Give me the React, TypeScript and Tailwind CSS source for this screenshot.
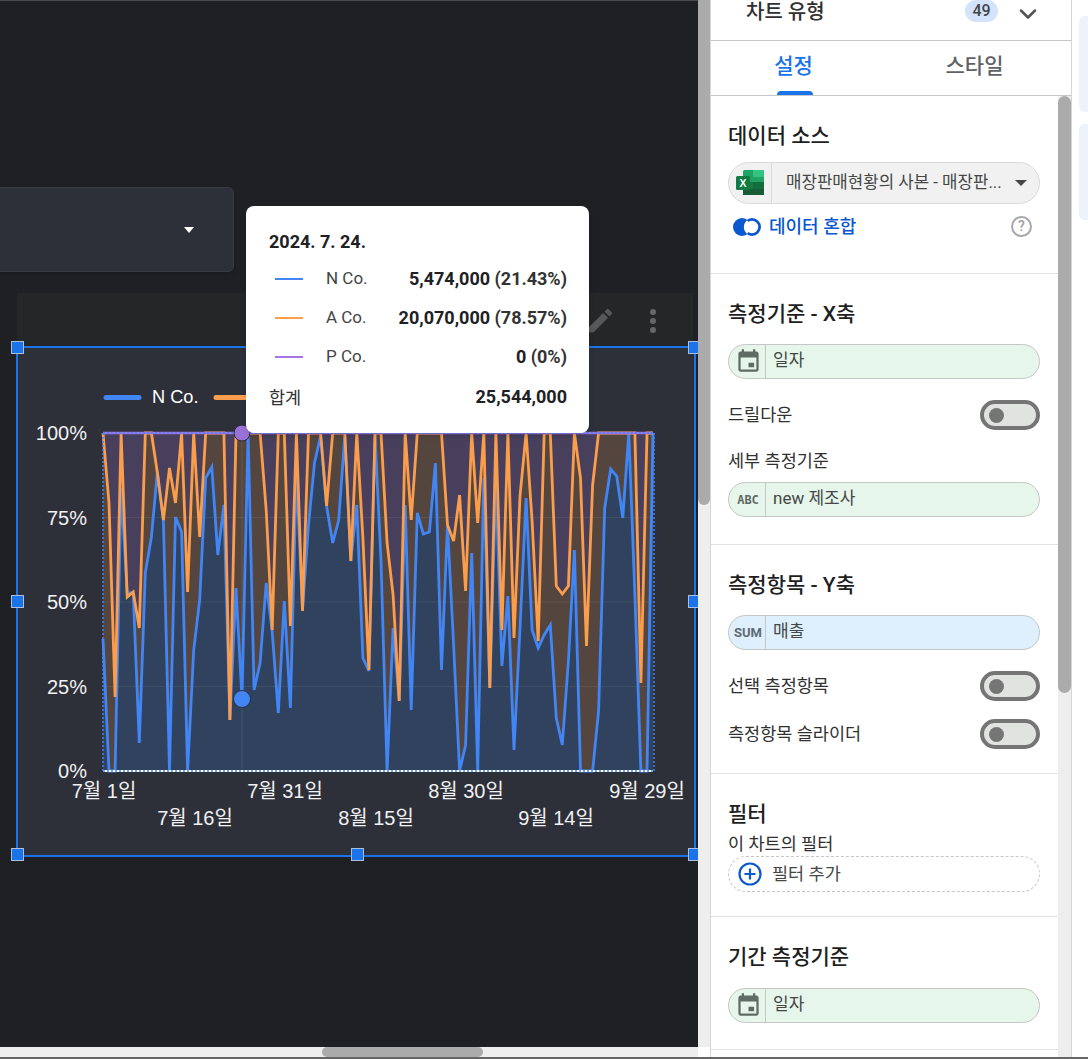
import React from "react";
import { ChevronDown } from "lucide-react";

// pixel offsets from the top of the plot (0 = 100%, 338 = 0%)
const blueLine = [
  206, 338, 338, 55, 160, 160, 310, 140, 104, 39, 87, 338, 84, 99, 338, 217, 167, 45, 34, 122, 72, 287, 155, 266, 0,
  257, 230, 150, 199, 280, 168, 275, 38, 178, 92, 30, 3, 73, 110, 87, 3, 128, 72, 225, 238, 2, 128, 338, 195, 268, 72,
  277, 80, 101, 99, 30, 237, 92, 212, 338, 312, 120, 338, 45, 255, 48, 233, 163, 317, 195, 65, 197, 215, 202, 192, 285,
  312, 228, 117, 338, 338, 338, 278, 75, 36, 43, 85, 0, 162, 338, 338, 0,
];
const orangeLine = [
  0, 70, 264, 0, 164, 159, 195, 0, 0, 40, 87, 35, 70, 0, 159, 0, 104, 0, 0, 0, 0, 287, 0, 0, 0, 0, 0, 77, 197, 0, 0,
  193, 0, 178, 0, 0, 0, 73, 0, 0, 0, 128, 0, 105, 237, 0, 0, 110, 162, 268, 0, 87, 0, 0, 0, 0, 0, 92, 108, 62, 158, 0,
  90, 0, 255, 0, 197, 0, 205, 63, 0, 88, 208, 0, 0, 153, 161, 153, 0, 45, 213, 52, 0, 0, 0, 0, 0, 0, 0, 250, 0, 0,
];

const px = (i: number) => 103 + i * 6.044;
const toPoints = (line: number[]) => line.map((y, i) => `${px(i).toFixed(1)},${433 + y}`).join(" ");
const toArea = (line: number[]) => `103,771 ${toPoints(line)} 653,771`;

const yLabels = [
  { label: "100%", y: 440 },
  { label: "75%", y: 525 },
  { label: "50%", y: 609 },
  { label: "25%", y: 694 },
  { label: "0%", y: 778 },
];
const xLabels = [
  { label: "7월 1일", x: 104, y: 798 },
  { label: "7월 16일", x: 195, y: 825 },
  { label: "7월 31일", x: 285, y: 798 },
  { label: "8월 15일", x: 376, y: 825 },
  { label: "8월 30일", x: 466, y: 798 },
  { label: "9월 14일", x: 556, y: 825 },
  { label: "9월 29일", x: 647, y: 798 },
];
const handles = [
  "left-[-7px] top-[-7px]",
  "left-[670px] top-[-7px]",
  "left-[-7px] top-[247px]",
  "left-[670px] top-[247px]",
  "left-[-7px] top-[500px]",
  "left-[333px] top-[500px]",
  "left-[670px] top-[500px]",
];
const tooltipRows = [
  { name: "N Co.", value: "5,474,000", share: "(21.43%)", color: "bg-[#4285f4]" },
  { name: "A Co.", value: "20,070,000", share: "(78.57%)", color: "bg-[#ff9e4a]" },
  { name: "P Co.", value: "0", share: "(0%)", color: "bg-[#a875e8]" },
];

function CalendarIcon() {
  return (
    <svg viewBox="0 0 24 24" className="h-[27px] w-[27px] fill-[#5f6b64]">
      <path d="M6 1h2v2h8V1h2v2h1c1.1 0 2 .9 2 2v14c0 1.1-.9 2-2 2H5c-1.1 0-2-.9-2-2V5c0-1.1.9-2 2-2h1V1zM5 8.5V19h14V8.5H5zM12 13h5v4h-5v-4z" />
    </svg>
  );
}

function Chip({ icon, label, tone }: { icon: React.ReactNode; label: string; tone: "green" | "blue" }) {
  return (
    <div
      className={`flex h-[35px] w-[312px] items-center rounded-full border border-[#c4c7c5] ${
        tone === "green" ? "bg-[#e6f6ea]" : "bg-[#def0fd]"
      }`}
    >
      <div className="flex h-full w-[37px] shrink-0 items-center justify-center border-r border-[#c4c7c5] pl-[2px]">
        {icon}
      </div>
      <span className="pl-[7px] pb-[2px] text-[17px] text-[#444746]">{label}</span>
    </div>
  );
}

function Toggle() {
  return (
    <div className="flex h-[30px] w-[60px] items-center rounded-full border-[4px] border-[#757575] bg-[#e1e3e1] pl-[5px]">
      <div className="h-[15px] w-[15px] rounded-full bg-[#757575]" />
    </div>
  );
}

function Heading({ children }: { children: React.ReactNode }) {
  return <h3 className="text-[21px] font-medium leading-[26px] text-[#1f1f1f]">{children}</h3>;
}

function ExcelIcon() {
  return (
    <svg viewBox="0 0 28 26" className="h-[26px] w-[28px]">
      <rect x="7" y="0" width="21" height="25" rx="1.5" fill="#21a366" />
      <rect x="17" y="0" width="11" height="7" fill="#33c481" />
      <rect x="7" y="12" width="21" height="13" fill="#107c41" />
      <rect x="17" y="12" width="11" height="7" fill="#185c37" opacity="0.45" />
      <rect x="7" y="19" width="21" height="6" fill="#185c37" />
      <rect x="0" y="6" width="14" height="14" rx="1.5" fill="#107c41" />
      <text x="3.5" y="17" fontSize="10.5" fontWeight="700" fill="#fff" className="font-['Liberation_Sans',sans-serif]">
        X
      </text>
    </svg>
  );
}

function ChartCard() {
  return (
    <div className="absolute left-[16px] top-[345px] h-[511px] w-[680px] border-2 border-[#1a73e8] bg-[#2d2f39]">
      <svg viewBox="18 348 676 507" className="absolute inset-0 h-full w-full">
        <polygon points="103,433 653,433 653,771 103,771" fill="#473f5c" />
        <polygon points={toArea(orangeLine)} fill="#54463e" />
        <polygon points={toArea(blueLine)} fill="#30425d" />
        {[517.5, 602, 686.5].map((y) => (
          <line key={y} x1="103" x2="653" y1={y} y2={y} stroke="#ffffff" strokeOpacity="0.07" />
        ))}
        <line x1="242" x2="242" y1="433" y2="771" stroke="#ffffff" strokeOpacity="0.1" />
        <polyline points={toPoints(blueLine)} fill="none" stroke="#4285f4" strokeWidth="2.8" strokeLinejoin="miter" />
        <polyline points={toPoints(orangeLine)} fill="none" stroke="#fa9d4c" strokeWidth="2.8" strokeLinejoin="miter" />
        <line x1="103" x2="653" y1="433" y2="433" stroke="#a875e8" strokeWidth="2.5" />
        <line x1="103" x2="653" y1="433" y2="433" stroke="#4285f4" strokeWidth="1.5" strokeDasharray="2 2" />
        <line x1="103" x2="653" y1="771" y2="771" stroke="#ffffff" strokeWidth="2" />
        <line x1="103" x2="653" y1="771" y2="771" stroke="#4285f4" strokeWidth="1.5" strokeDasharray="2 2" />
        <line x1="103" x2="103" y1="433" y2="771" stroke="#4285f4" strokeWidth="1.5" strokeDasharray="2 2" />
        <line x1="654" x2="654" y1="433" y2="771" stroke="#4285f4" strokeWidth="1.5" strokeDasharray="2 2" />
        <circle cx="242" cy="433" r="8" fill="#9a71d6" stroke="#2b2b35" />
        <circle cx="242" cy="699" r="8.5" fill="#4285f4" stroke="#26334a" />

        <line x1="106" x2="139" y1="397.5" y2="397.5" stroke="#4285f4" strokeWidth="5" strokeLinecap="round" />
        <text x="152" y="403" fontSize="18.2" fill="#ffffff">
          N Co.
        </text>
        <line x1="216" x2="250" y1="397.5" y2="397.5" stroke="#fa9d4c" strokeWidth="5" strokeLinecap="round" />

        {yLabels.map((item) => (
          <text key={item.label} x="87" y={item.y} fontSize="20" fill="#f1f1f1" textAnchor="end">
            {item.label}
          </text>
        ))}
        {xLabels.map((item) => (
          <text key={item.label} x={item.x} y={item.y} fontSize="20" fill="#f1f1f1" textAnchor="middle">
            {item.label}
          </text>
        ))}
      </svg>
      {handles.map((pos) => (
        <div key={pos} className={`absolute h-[13px] w-[13px] border border-[#a9bfdf] bg-[#1a73e8] ${pos}`} />
      ))}
    </div>
  );
}

function Tooltip() {
  return (
    <div className="absolute left-[246px] top-[205px] h-[227px] w-[343px] rounded-lg bg-white pl-[23px] pr-[22px] pt-[26px] font-['Roboto','Noto_Sans_CJK_KR',sans-serif] text-[17px] text-[#202124] shadow-md">
      <div className="text-[18px] font-bold leading-[20px]">2024. 7. 24.</div>
      <div className="mt-[7px] flex flex-col">
        {tooltipRows.map((row) => (
          <div key={row.name} className="flex h-[39px] items-center">
            <div className={`ml-[6px] h-[2px] w-[28px] ${row.color}`} />
            <span className="ml-[23px] text-[#444]">{row.name}</span>
            <span className="ml-auto whitespace-pre text-[18px]">
              <b className="font-bold">{row.value}</b>
              <b className="font-bold text-[#333]"> {row.share}</b>
            </span>
          </div>
        ))}
      </div>
      <div className="mt-[9px] flex items-center justify-between">
        <span className="text-[17.5px] text-[#333]">합계</span>
        <b className="-mt-[3px] text-[18px] font-bold">25,544,000</b>
      </div>
    </div>
  );
}

function Canvas() {
  return (
    <div className="relative w-[698px] flex-1 overflow-hidden border-t border-[#4a4a4a] bg-[#1f2024]">
      <div className="absolute left-[-20px] top-[186px] flex h-[85px] w-[254px] items-center justify-end rounded-md border border-[#3a3c44] bg-[#2d2f39] pr-[39px] shadow-md">
        <div className="h-0 w-0 border-x-[5px] border-t-[6px] border-x-transparent border-t-white" />
      </div>
      <div className="absolute left-[17px] top-[292px] flex h-[55px] w-[676px] items-center justify-end bg-[#252628] pr-[37px]">
        <svg viewBox="0 0 24 24" className="mr-[34px] h-[31px] w-[31px] fill-[#57585a]">
          <path d="M3 17.25V21h3.75L17.81 9.94l-3.75-3.75L3 17.25zM20.71 7.04a1 1 0 0 0 0-1.41l-2.34-2.34a1 1 0 0 0-1.41 0l-1.83 1.83 3.75 3.75 1.83-1.83z" />
        </svg>
        <div className="flex flex-col gap-[3px]">
          <div className="h-[6px] w-[6px] rounded-full bg-[#66676a]" />
          <div className="h-[6px] w-[6px] rounded-full bg-[#66676a]" />
          <div className="h-[6px] w-[6px] rounded-full bg-[#66676a]" />
        </div>
      </div>
      <ChartCard />
      <Tooltip />
    </div>
  );
}

function Panel() {
  return (
    <div className="flex w-[362px] flex-col border-x border-[#d5d5d5] bg-white font-['Roboto','Noto_Sans_CJK_KR',sans-serif]">
      <div className="flex h-[41px] shrink-0 items-start border-b border-[#c7c7c7] pl-[35px] pr-[29px]">
        <span className="text-[20px] font-medium leading-[24px] text-[#303030]">차트 유형</span>
        <span className="ml-auto flex h-[22px] w-[33px] items-center justify-center rounded-b-full rounded-t-full bg-[#d3e3fd] text-[16px] font-medium text-[#444746]">
          49
        </span>
        <ChevronDown className="ml-[16px] h-[28px] w-[28px] text-[#555]" strokeWidth={2.2} />
      </div>
      <div className="flex h-[55px] shrink-0 border-b border-[#c7c7c7]">
        <div className="relative flex w-[167px] justify-center pt-[10px] text-[21px] font-medium text-[#1a73e8]">
          <span className="ml-[-2px]">설정</span>
          <div className="absolute bottom-0 left-[66px] h-[4px] w-[36px] rounded-t bg-[#1a73e8]" />
        </div>
        <div className="flex flex-1 justify-center pt-[10px] text-[21px] font-medium text-[#5f6368]">스타일</div>
      </div>
      <div className="flex flex-1 overflow-hidden">
        <div className="w-[347px] shrink-0">
          <section className="h-[178px] border-b border-[#e3e3e3] pl-[17px] pt-[27px]">
            <Heading>데이터 소스</Heading>
            <div className="mt-[13px] flex h-[42px] w-[312px] items-center rounded-full border border-[#dadada] bg-[#f1f1f1]">
              <div className="flex h-full w-[43px] shrink-0 items-center justify-center border-r border-[#dadada]">
                <ExcelIcon />
              </div>
              <span className="whitespace-nowrap pl-[14px] text-[16.8px] text-[#444746]">
                매장판매현황의 사본 - 매장판...
              </span>
              <div className="ml-auto mr-[12px] h-0 w-0 border-x-[6px] border-t-[6px] border-x-transparent border-t-[#444746]" />
            </div>
            <div className="mt-[9px] flex w-[312px] items-center">
              <svg viewBox="0 0 28 18" className="ml-[5px] h-[18px] w-[28px]">
                <circle cx="9" cy="9" r="9" fill="#0b57d0" />
                <circle cx="19" cy="9" r="7.6" fill="#fff" stroke="#0b57d0" strokeWidth="2.8" />
                <path d="M14 2.2a9 9 0 0 1 0 13.6a9 9 0 0 1 0-13.6z" fill="#fff" />
              </svg>
              <span className="ml-[8px] text-[18px] font-medium text-[#0b57d0]">데이터 혼합</span>
              <span className="ml-auto mr-[8px] flex h-[21px] w-[21px] items-center justify-center rounded-full border-2 border-[#a8a8a8] text-[14px] font-medium text-[#a0a0a0]">
                ?
              </span>
            </div>
          </section>
          <section className="h-[271px] border-b border-[#e3e3e3] pl-[17px] pt-[27px]">
            <Heading>측정기준 - X축</Heading>
            <div className="mt-[17px]">
              <Chip icon={<CalendarIcon />} label="일자" tone="green" />
            </div>
            <div className="mt-[21px] flex w-[312px] items-center justify-between">
              <span className="text-[17.5px] text-[#303030]">드릴다운</span>
              <Toggle />
            </div>
            <div className="mt-[19px] text-[17.5px] leading-[24px] text-[#303030]">세부 측정기준</div>
            <div className="mt-[9px]">
              <Chip
                icon={<span className="font-['DejaVu_Sans_Mono',monospace] text-[12px] font-bold text-[#5f6b64]">ABC</span>}
                label="new 제조사"
                tone="green"
              />
            </div>
          </section>
          <section className="h-[229px] border-b border-[#e3e3e3] pl-[17px] pt-[27px]">
            <Heading>측정항목 - Y축</Heading>
            <div className="mt-[17px]">
              <Chip icon={<span className="text-[13px] font-bold text-[#5f6b74]">SUM</span>} label="매출" tone="blue" />
            </div>
            <div className="mt-[21px] flex w-[312px] items-center justify-between">
              <span className="text-[17.5px] text-[#303030]">선택 측정항목</span>
              <Toggle />
            </div>
            <div className="mt-[18px] flex w-[312px] items-center justify-between">
              <span className="text-[17.5px] text-[#303030]">측정항목 슬라이더</span>
              <Toggle />
            </div>
          </section>
          <section className="h-[143px] border-b border-[#e3e3e3] pl-[17px] pt-[27px]">
            <Heading>필터</Heading>
            <div className="mt-[6px] text-[17.5px] leading-[22px] text-[#303030]">이 차트의 필터</div>
            <div className="mt-[1px] flex h-[36px] w-[312px] items-center rounded-full border border-dashed border-[#c4c7c5] pl-[9px]">
              <svg viewBox="0 0 24 24" className="h-[24px] w-[24px]">
                <circle cx="12" cy="12" r="10.5" fill="none" stroke="#0b57d0" strokeWidth="2.2" />
                <path d="M12 6.5v11M6.5 12h11" stroke="#0b57d0" strokeWidth="2.2" />
              </svg>
              <span className="ml-[10px] text-[17.5px] text-[#444746]">필터 추가</span>
            </div>
          </section>
          <section className="h-[133px] border-b border-[#e3e3e3] pl-[17px] pt-[27px]">
            <Heading>기간 측정기준</Heading>
            <div className="mt-[18px]">
              <Chip icon={<CalendarIcon />} label="일자" tone="green" />
            </div>
          </section>
        </div>
        <div className="w-[13px] shrink-0 bg-[#eeeeee]">
          <div className="h-[597px] rounded-full bg-[#ababab]" />
        </div>
      </div>
    </div>
  );
}

export default function App() {
  return (
    <div className="h-[1059px] w-[1088px] overflow-hidden bg-white font-['Liberation_Sans','Noto_Sans_CJK_KR',sans-serif]">
      <div className="flex h-[1057px]">
        <div className="flex w-[698px] flex-col">
          <Canvas />
          <div className="h-[10px] shrink-0 bg-[#eeeeee] pl-[322px]">
            <div className="h-full w-[161px] rounded-full bg-[#ababab]" />
          </div>
        </div>
        <div className="flex w-[12px] flex-col">
          <div className="h-[1047px] bg-[#eeeeee]">
            <div className="h-[505px] rounded-b-full bg-[#ababab]" />
          </div>
        </div>
        <Panel />
        <div className="flex flex-1 flex-col items-end gap-[12px] pt-[16px]">
          <div className="h-[96px] w-[9px] rounded-l-md bg-[#edf2fb]" />
          <div className="h-[96px] w-[9px] rounded-l-md bg-[#edf2fb]" />
        </div>
      </div>
      <div className="h-[2px] bg-[#666666]" />
    </div>
  );
}
